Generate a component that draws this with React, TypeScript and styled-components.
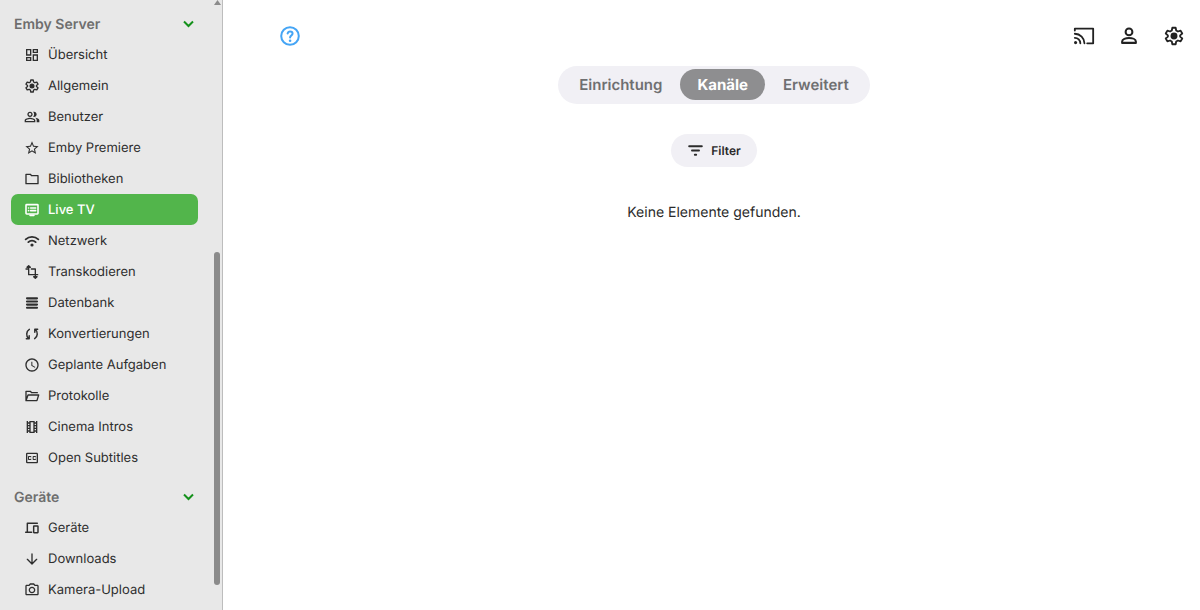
import React from "react";
import styled, { createGlobalStyle } from "styled-components";
import {
  MdOutlineDashboard,
  MdOutlinePeopleAlt,
  MdStarBorder,
  MdSchedule,
  MdOutlineTheaters,
  MdOutlineClosedCaption,
  MdOutlineCameraAlt,
} from "react-icons/md";

const GlobalStyle = createGlobalStyle`
  * { box-sizing: border-box; }
  body {
    margin: 0;
    background: #fff;
    color: #2b2b2b;
    font-family: Inter, "Liberation Sans", sans-serif;
    text-rendering: geometricPrecision;
  }
  button { font: inherit; color: inherit; border: 0; padding: 0; background: none; cursor: pointer; text-rendering: inherit; }
`;

const Page = styled.div`
  display: flex;
  height: 100vh;
  overflow: hidden;
`;

const Sidebar = styled.aside`
  display: flex;
  flex: 0 0 223px;
  background: #e8e8e8;
  border-right: 1px solid #bdbdbd;
`;

const Nav = styled.nav`
  flex: 1;
  padding: 9px 15px 0 11px;
  overflow: hidden;
`;

const Section = styled.section`
  margin-bottom: 9px;
`;

const SectionToggle = styled.button`
  display: flex;
  align-items: center;
  justify-content: space-between;
  width: 100%;
  height: 30px;
  padding: 0 4px 0 3px;
  color: #6e6e6e;
  font-size: 14px;
  font-weight: 600;
`;

const List = styled.ul`
  margin: 0;
  padding: 0;
  list-style: none;
`;

const NavLink = styled.a<{ $active?: boolean }>`
  display: flex;
  align-items: center;
  gap: 8px;
  height: 31px;
  padding-left: 13px;
  border-radius: 7px;
  background: ${(p) => (p.$active ? "#52b54b" : "transparent")};
  color: ${(p) => (p.$active ? "#fff" : "#2e2e2e")};
  font-size: 13px;
  font-weight: ${(p) => (p.$active ? 500 : 400)};
  text-decoration: none;

  svg { width: 16px; height: 16px; flex: none; }
`;

const Scrollbar = styled.div`
  display: flex;
  flex-direction: column;
  align-items: center;
  width: 8px;
  margin-right: 1px;
`;

const ScrollArrow = styled.svg`
  width: 7px;
  height: 6px;
  fill: #8b8b8b;
`;

const ScrollGap = styled.div<{ $grow: number }>`
  flex: ${(p) => p.$grow} 0 0;
`;

const ScrollThumb = styled.div`
  flex: 333 0 0;
  width: 6px;
  border-radius: 3px;
  background: #8b8b8b;
`;

const Main = styled.main`
  flex: 1;
  min-width: 0;
`;

const Header = styled.header`
  display: flex;
  align-items: center;
  justify-content: space-between;
  height: 66px;
  padding: 6px 15px 0 56px;
`;

const HeaderActions = styled.div`
  display: flex;
  gap: 23px;
`;

const IconButton = styled.button<{ $color?: string }>`
  display: flex;
  color: ${(p) => p.$color ?? "#222"};
  svg { width: 22px; height: 22px; }
`;

const Content = styled.div`
  display: flex;
  flex-direction: column;
  align-items: center;
  padding-left: 5px;
`;

const Tabs = styled.div`
  display: flex;
  gap: 1px;
  padding: 3px 4px 4px;
  border-radius: 19px;
  background: #f1f0f5;
`;

const Tab = styled.button<{ $active?: boolean }>`
  height: 31px;
  padding: 0 17px;
  border-radius: 16px;
  background: ${(p) => (p.$active ? "#8e8e90" : "transparent")};
  color: ${(p) => (p.$active ? "#fff" : "#6f6f71")};
  font-size: 15px;
  font-weight: ${(p) => (p.$active ? 700 : 600)};
`;

const FilterButton = styled.button`
  display: flex;
  align-items: center;
  gap: 7px;
  height: 33px;
  margin-top: 30px;
  padding: 0 16px;
  border-radius: 17px;
  background: #f1f0f5;
  font-size: 12px;
  font-weight: 600;
  svg { width: 17px; height: 17px; }
`;

const Message = styled.p`
  margin: 36px 0 0;
  font-size: 14px;
  line-height: 20px;
`;

type StrokeProps = { width?: number; children: React.ReactNode };

const Stroke = ({ width = 2, children }: StrokeProps) => (
  <svg viewBox="0 0 24 24" fill="none" stroke="currentColor" strokeWidth={width} strokeLinecap="round" strokeLinejoin="round" aria-hidden="true">
    {children}
  </svg>
);

const GearIcon = () => (
  <Stroke>
    <path d="M10.200 3h3.600l.6 3 1.900 1.100 2.900-1 1.800 3.200-2.300 2v1.400l2.300 2-1.800 3.200-2.900-1-1.900 1.100-.6 3h-3.600l-.6-3-1.900-1.100-2.900 1-1.800-3.200 2.300-2v-1.400l-2.300-2 1.800-3.200 2.900 1 1.900-1.100z" />
    <circle cx="12" cy="12" r="3.800" fill="currentColor" stroke="none" />
  </Stroke>
);

const FolderIcon = () => (
  <Stroke>
    <path d="M3 5h6.500l2 2H21v12H3z" />
  </Stroke>
);

const LiveTvIcon = () => (
  <Stroke width={2.4}>
    <rect x="3" y="4" width="18" height="14" rx="1" />
    <path d="M9 20h6M10 9h7.500M10 13h7.500M6.800 9h.1M6.800 13h.1" />
  </Stroke>
);

const WifiIcon = () => (
  <Stroke width={2.8}>
    <path d="M2.500 9.500a14 14 0 0 1 19 0M6.500 13.700a8 8 0 0 1 11 0" />
    <circle cx="12" cy="18" r="2.400" fill="currentColor" stroke="none" />
  </Stroke>
);

const TransformIcon = () => (
  <Stroke>
    <path d="M7 5v11h13.500M3 7.500h4M11 7.500h6v10" />
    <path d="M4.500 5L7 2.500 9.500 5zM14.500 19l2.500 2.500 2.500-2.500z" fill="currentColor" />
  </Stroke>
);

const DatabaseIcon = () => (
  <Stroke width={3.2}>
    <path d="M4.500 5h15M4.500 9.700h15M4.500 14.400h15M4.500 19.100h15" />
  </Stroke>
);

const ConvertIcon = () => (
  <Stroke width={2.200}>
    <path d="M8 5C3 8 3 15.500 6.800 18.700M3.500 19h4.300v-4.300M16 19c5-3 5-10.500 1.200-13.700M20.500 5h-4.300v4.300" />
  </Stroke>
);

const FolderOpenIcon = () => (
  <Stroke>
    <path d="M3 19V5h6.500l2 2H20M3 19l3-8.500h16L19.400 19z" />
  </Stroke>
);

const DevicesIcon = () => (
  <Stroke width={2.200}>
    <path d="M5 18V5h15M2.500 18.500h9" />
    <rect x="14.500" y="9" width="6.500" height="10" rx="0.500" />
  </Stroke>
);

const DownloadIcon = () => (
  <Stroke>
    <path d="M12 4.500v14.500M5 12.500l7 7 7-7" />
  </Stroke>
);

const HelpIcon = () => (
  <Stroke width={2.2}>
    <circle cx="12" cy="12" r="9.600" />
    <path d="M9.400 9.300c.3-1.500 1.400-2.300 2.700-2.300 1.600 0 2.700 1 2.700 2.400 0 2-2.700 2.300-2.700 4.300" />
    <circle cx="12.100" cy="17.100" r="1.400" fill="currentColor" stroke="none" />
  </Stroke>
);

const CastIcon = () => (
  <Stroke>
    <path d="M2 6V4h20v16h-6.500M2 9.500A10.500 10.500 0 0 1 12.500 20M2 14a6 6 0 0 1 6 6" />
    <circle cx="2.800" cy="19.200" r="1.700" fill="currentColor" stroke="none" />
  </Stroke>
);

const PersonIcon = () => (
  <Stroke width={2.2}>
    <circle cx="12" cy="7.500" r="3.700" />
    <path d="M4.500 19.500v-1.500c0-2.500 4-3.800 7.500-3.800s7.500 1.300 7.500 3.800v1.500z" />
  </Stroke>
);

const FilterIcon = () => (
  <Stroke width={2.6}>
    <path d="M3 6h18M7 12h10M11 18h2" />
  </Stroke>
);

const ChevronIcon = () => (
  <svg width="11" height="8" viewBox="0 0 11 8" fill="none" stroke="#14911b" strokeWidth="2" aria-hidden="true">
    <path d="M1 1.500l4.500 4.500 4.500-4.500" />
  </svg>
);

type Item = { label: string; icon: React.ReactNode; active?: boolean };

const sections: { title: string; items: Item[] }[] = [
  {
    title: "Emby Server",
    items: [
      { label: "Übersicht", icon: <MdOutlineDashboard /> },
      { label: "Allgemein", icon: <GearIcon /> },
      { label: "Benutzer", icon: <MdOutlinePeopleAlt /> },
      { label: "Emby Premiere", icon: <MdStarBorder /> },
      { label: "Bibliotheken", icon: <FolderIcon /> },
      { label: "Live TV", icon: <LiveTvIcon />, active: true },
      { label: "Netzwerk", icon: <WifiIcon /> },
      { label: "Transkodieren", icon: <TransformIcon /> },
      { label: "Datenbank", icon: <DatabaseIcon /> },
      { label: "Konvertierungen", icon: <ConvertIcon /> },
      { label: "Geplante Aufgaben", icon: <MdSchedule /> },
      { label: "Protokolle", icon: <FolderOpenIcon /> },
      { label: "Cinema Intros", icon: <MdOutlineTheaters /> },
      { label: "Open Subtitles", icon: <MdOutlineClosedCaption /> },
    ],
  },
  {
    title: "Geräte",
    items: [
      { label: "Geräte", icon: <DevicesIcon /> },
      { label: "Downloads", icon: <DownloadIcon /> },
      { label: "Kamera-Upload", icon: <MdOutlineCameraAlt /> },
    ],
  },
];

export default function App() {
  return (
    <Page>
      <GlobalStyle />
      <Sidebar>
        <Nav>
          {sections.map((section) => (
            <Section key={section.title}>
              <SectionToggle aria-expanded="true">
                {section.title}
                <ChevronIcon />
              </SectionToggle>
              <List>
                {section.items.map((item) => (
                  <li key={item.label}>
                    <NavLink href="#" $active={item.active}>
                      {item.icon}
                      {item.label}
                    </NavLink>
                  </li>
                ))}
              </List>
            </Section>
          ))}
        </Nav>
        <Scrollbar aria-hidden="true">
          <ScrollArrow viewBox="0 0 7 6">
            <path d="M3.500 0L7 5H0z" />
          </ScrollArrow>
          <ScrollGap $grow={246} />
          <ScrollThumb />
          <ScrollGap $grow={25} />
        </Scrollbar>
      </Sidebar>
      <Main>
        <Header>
          <IconButton $color="#45a5f5" aria-label="Hilfe">
            <HelpIcon />
          </IconButton>
          <HeaderActions>
            <IconButton aria-label="Übertragen"><CastIcon /></IconButton>
            <IconButton aria-label="Benutzer"><PersonIcon /></IconButton>
            <IconButton aria-label="Einstellungen"><GearIcon /></IconButton>
          </HeaderActions>
        </Header>
        <Content>
          <Tabs role="tablist">
            <Tab role="tab">Einrichtung</Tab>
            <Tab role="tab" aria-selected="true" $active>Kanäle</Tab>
            <Tab role="tab">Erweitert</Tab>
          </Tabs>
          <FilterButton>
            <FilterIcon />
            Filter
          </FilterButton>
          <Message>Keine Elemente gefunden.</Message>
        </Content>
      </Main>
    </Page>
  );
}
